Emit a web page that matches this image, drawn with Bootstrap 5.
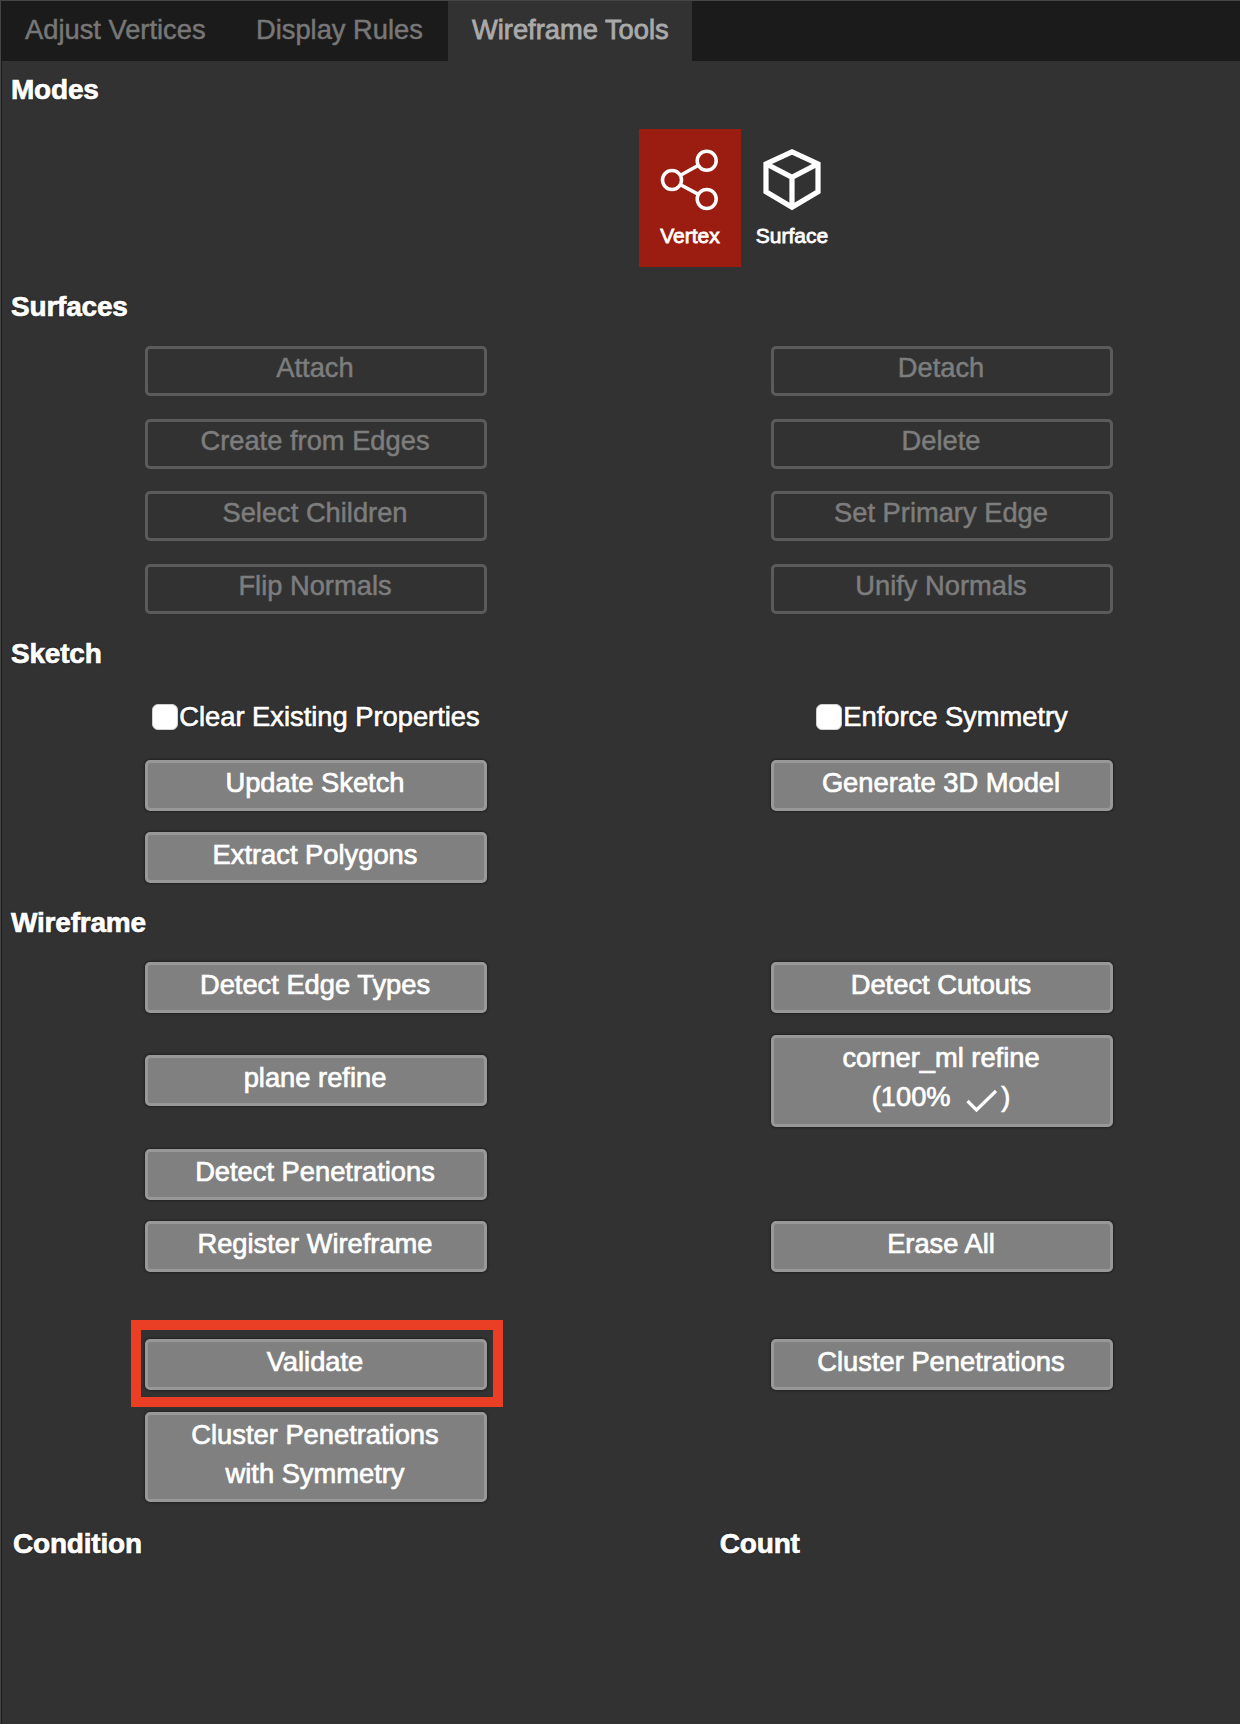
<!DOCTYPE html>
<html lang="en">
<head>
<meta charset="utf-8">
<meta name="viewport" content="width=device-width, initial-scale=1">
<title>Wireframe Tools</title>
<link rel="stylesheet" href="https://cdn.jsdelivr.net/npm/bootstrap@5.3.0/dist/css/bootstrap.min.css">
<style>
body{background:#323232;color:#fff;font-family:"Liberation Sans",Arial,sans-serif;font-size:27.3px;line-height:38px;min-height:1724px;overflow-x:hidden}
.tool-panel{min-height:1724px;border-left:1px solid #444}
.tab-strip{height:61px;background:#1b1b1b;border-top:1px solid #454545;--bs-nav-link-padding-x:0;flex-wrap:nowrap}
.tab-strip .nav-link{height:60px;color:#777;border-radius:0;line-height:38px;padding:10px 24px 0;white-space:nowrap;-webkit-text-stroke:.5px}
.tab-strip .nav-link.active{background:#323232;color:#aaa;width:244px;-webkit-text-stroke:.8px}
.tab-strip .nav-link:first-child{width:231px;padding-left:24px}
.tab-strip .nav-link:nth-child(2){width:216px}
.panel-body{border-left:1px solid #1d1d1d;min-height:1663px;padding-top:10px}
.sect-title{font-size:28px;font-weight:700;line-height:38px;margin:0 0 20.3px;padding-left:9px;letter-spacing:-.2px;-webkit-text-stroke:.7px;text-shadow:0 0 2px #000}
.tool-grid{display:grid;grid-template-columns:342px 342px;column-gap:284px;row-gap:21.8px;padding-left:143px;margin-bottom:20.3px;align-items:center}
.tool-grid .btn{--bs-btn-border-radius:5px;--bs-btn-padding-x:0;--bs-btn-padding-y:0;border:3px solid #989898;background:#808080;color:#fff;font-size:27.3px;line-height:39px;padding:0 2px 6px 0;min-height:51px;box-shadow:0 0 2px 1px #222;-webkit-text-stroke:.7px}
.tool-grid .btn:disabled{background:transparent;border-color:#5b5b5b;color:#7d7d7d;opacity:1;box-shadow:none;-webkit-text-stroke:.5px;min-height:50px;line-height:38px}
.disabled-tools{row-gap:22.8px;margin-bottom:21px}
.tool-grid .two-line{height:92px;min-height:0;padding-bottom:8px}
.check-line{text-shadow:0 0 2px #000;-webkit-text-stroke:.7px;margin-top:4px;margin-bottom:2.2px;white-space:nowrap}
.check-line .form-check-input{width:26px;height:26px;border:1px solid #d0d0d0;border-radius:6px;background:#fff;margin:0 1px 0 0}
.mode-row{padding-left:637px;height:138px;margin-bottom:20.3px}
.mode-tile{width:102px;height:138px;font-size:21px;line-height:26px;padding-top:14px;-webkit-text-stroke:.8px}
.mode-tile.active{background:#9b1d12}
.highlight-frame{left:-14px;right:-16px;top:-19px;bottom:-17px;border:10px solid #eb3f25;pointer-events:none}
.gap-above{margin-top:45.3px}
.result-head{margin-top:22.6px}
.cond-col{padding-left:11px}
.count-col{margin-left:578px}
</style>
<script src="https://cdn.jsdelivr.net/npm/bootstrap@5.3.0/dist/js/bootstrap.bundle.min.js"></script>
</head>
<body>
<main class="tool-panel">
  <nav class="nav tab-strip">
    <a class="nav-link" href="#">Adjust Vertices</a>
    <a class="nav-link" href="#">Display Rules</a>
    <a class="nav-link active" href="#">Wireframe Tools</a>
  </nav>
  <div class="panel-body">
    <h2 class="sect-title">Modes</h2>
    <div class="mode-row d-flex">
      <div class="mode-tile active d-flex flex-column align-items-center">
        <svg width="102" height="76" viewBox="0 0 102 76" fill="none" stroke="#fff" stroke-width="3.5"><circle cx="33" cy="37" r="9.5"/><circle cx="67.7" cy="17.7" r="9.5"/><circle cx="67.7" cy="56" r="9.5"/><path d="M41.5 32.3 59.5 22.3M41.5 41.7l18 9.7"/></svg>
        <span class="d-block mt-1">Vertex</span>
      </div>
      <div class="mode-tile d-flex flex-column align-items-center">
        <svg width="102" height="76" viewBox="0 0 102 76" fill="none" stroke="#fff" stroke-width="5.2"><path d="M51 8.8 77 20.8V48.7L51 64.2 25 48.7V20.8ZM25 20.8 51 34.3 77 20.8M51 34.3V64"/></svg>
        <span class="d-block mt-1">Surface</span>
      </div>
    </div>

    <h2 class="sect-title">Surfaces</h2>
    <div class="tool-grid disabled-tools">
      <button class="btn" disabled>Attach</button>
      <button class="btn" disabled>Detach</button>
      <button class="btn" disabled>Create from Edges</button>
      <button class="btn" disabled>Delete</button>
      <button class="btn" disabled>Select Children</button>
      <button class="btn" disabled>Set Primary Edge</button>
      <button class="btn" disabled>Flip Normals</button>
      <button class="btn" disabled>Unify Normals</button>
    </div>

    <h2 class="sect-title">Sketch</h2>
    <div class="tool-grid">
      <label class="check-line d-flex align-items-center justify-content-center"><input class="form-check-input" type="checkbox">Clear Existing Properties</label>
      <label class="check-line d-flex align-items-center justify-content-center"><input class="form-check-input" type="checkbox">Enforce Symmetry</label>
      <button class="btn">Update Sketch</button>
      <button class="btn">Generate 3D Model</button>
      <button class="btn">Extract Polygons</button>
    </div>

    <h2 class="sect-title">Wireframe</h2>
    <div class="tool-grid">
      <button class="btn">Detect Edge Types</button>
      <button class="btn">Detect Cutouts</button>
      <button class="btn">plane refine</button>
      <button class="btn two-line">corner_ml refine<br>(100% <svg class="ms-2" width="31" height="26" viewBox="0 0 31 26" fill="none" stroke="#fff" stroke-width="3.2"><path d="m1.5 15 9 9L30 5"/></svg><span class="ms-1">)</span></button>
      <button class="btn">Detect Penetrations</button>
      <span></span>
      <button class="btn">Register Wireframe</button>
      <button class="btn">Erase All</button>
      <div class="gap-above position-relative d-grid">
        <button class="btn">Validate</button>
        <div class="highlight-frame position-absolute"></div>
      </div>
      <button class="btn gap-above">Cluster Penetrations</button>
      <button class="btn">Cluster Penetrations<br>with Symmetry</button>
    </div>

    <div class="result-head d-flex">
      <h2 class="sect-title cond-col">Condition</h2>
      <h2 class="sect-title count-col ps-0">Count</h2>
    </div>
  </div>
</main>
</body>
</html>
